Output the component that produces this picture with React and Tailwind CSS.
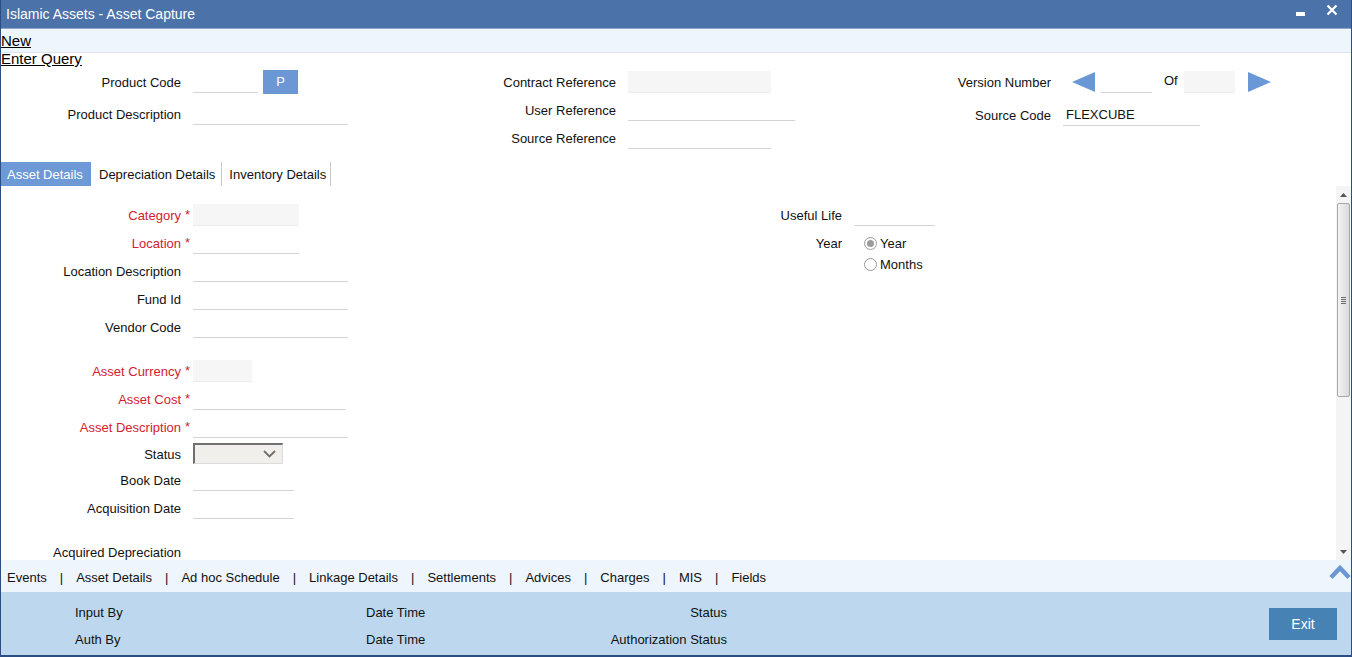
import React from "react";

const RED = "text-[#d3212d]";

function Line({ w, grey, children }) {
  return (
    <div
      className={
        grey
          ? `${w} h-[22px] bg-[#f6f6f6] border-b border-[#ededed]`
          : `${w} h-[22px] border-b border-[#d4d4d4] flex items-center pl-[3px] pt-[1px]`
      }
    >
      {children}
    </div>
  );
}

function FieldRow({ label, req, h = "h-[28px]", mt = "", lw = "w-[180px]", children }) {
  return (
    <div className={`flex items-center ${h} ${mt}`}>
      <div className={`${lw} text-right shrink-0 pt-[2px] whitespace-nowrap ${req ? RED : ""}`}>{label}</div>
      <div className={`w-[12px] shrink-0 pl-[4px] self-start pt-[4px] ${RED}`}>{req ? "*" : ""}</div>
      {children}
    </div>
  );
}

function Radio({ checked }) {
  return (
    <span className="w-[13px] h-[13px] rounded-full border border-[#9a9a9a] bg-white flex items-center justify-center shrink-0">
      {checked && <span className="w-[7px] h-[7px] rounded-full bg-[#9b9b9b]" />}
    </span>
  );
}

function TriLeft() {
  return (
    <svg width="23" height="20" viewBox="0 0 23 20" className="shrink-0">
      <polygon points="0,10 23,0 23,20" fill="#6a98d6" />
    </svg>
  );
}
function TriRight() {
  return (
    <svg width="23" height="20" viewBox="0 0 23 20" className="shrink-0">
      <polygon points="23,10 0,0 0,20" fill="#6a98d6" />
    </svg>
  );
}

export default function App() {
  const bottomTabs = [
    "Events",
    "Asset Details",
    "Ad hoc Schedule",
    "Linkage Details",
    "Settlements",
    "Advices",
    "Charges",
    "MIS",
    "Fields",
  ];
  return (
    <div className="w-[1352px] h-[657px] overflow-hidden bg-white font-['Liberation_Sans',Arial,sans-serif] text-[13px] text-[#111] flex flex-col border-x border-b-2 border-[#2b4d82]">
      {/* Title bar */}
      <div className="h-[28px] shrink-0 bg-[#4b73a9] flex justify-between">
        <div className="text-white text-[14px] pl-[5px] leading-[28px]">Islamic Assets - Asset Capture</div>
        <div className="flex items-start pr-[13px]">
          <div className="w-[9px] h-[4px] bg-white mt-[12px]" />
          <svg width="12" height="12" viewBox="0 0 12 12" className="ml-[21px] mt-[4px]">
            <path d="M1.5 1.5 L10.5 10.5 M10.5 1.5 L1.5 10.5" stroke="white" strokeWidth="2.2" />
          </svg>
        </div>
      </div>

      {/* Toolbar */}
      <div className="h-[25px] shrink-0 bg-[#eef5fd] border-t border-[#8da6c7] border-b border-b-[#dde3ea] pt-[3px]">
        <div className="text-[15px] leading-[18px] underline text-black">New</div>
      </div>
      <div className="text-[15px] leading-[18px] underline text-black -mt-[3px] h-[18px] shrink-0">Enter Query</div>

      {/* Header fields */}
      <div className="h-[94px] shrink-0 flex">
        <div className="w-[434px] shrink-0">
          <FieldRow label="Product Code">
            <Line w="w-[65px]" />
            <div className="ml-[5px] w-[35px] h-[24px] bg-[#6b98d4] text-white flex items-center justify-center">P</div>
          </FieldRow>
          <FieldRow label="Product Description" mt="mt-[4px]">
            <Line w="w-[155px]" />
          </FieldRow>
        </div>
        <div className="w-[435px] shrink-0">
          <FieldRow label="Contract Reference" lw="w-[181px]">
            <Line w="w-[143px]" grey />
          </FieldRow>
          <FieldRow label="User Reference" lw="w-[181px]">
            <Line w="w-[167px]" />
          </FieldRow>
          <FieldRow label="Source Reference" lw="w-[181px]">
            <Line w="w-[143px]" />
          </FieldRow>
        </div>
        <div className="flex-1">
          <div className="flex items-center h-[28px]">
            <div className="w-[181px] text-right shrink-0 pt-[2px]">Version Number</div>
            <div className="ml-[21px]">
              <TriLeft />
            </div>
            <div className="ml-[6px]">
              <Line w="w-[51px]" />
            </div>
            <div className="ml-[12px] -mt-[3px]">Of</div>
            <div className="ml-[6px]">
              <Line w="w-[51px]" grey />
            </div>
            <div className="ml-[13px]">
              <TriRight />
            </div>
          </div>
          <div className="flex items-center h-[28px] mt-[5px]">
            <div className="w-[181px] text-right shrink-0 pt-[2px]">Source Code</div>
            <div className="ml-[12px]">
              <Line w="w-[137px]">FLEXCUBE</Line>
            </div>
          </div>
        </div>
      </div>

      {/* Tabs */}
      <div className="h-[24px] shrink-0 flex items-stretch">
        <div className="bg-[#6d9ad6] text-white px-[6px] pt-[2px] w-[90px] whitespace-nowrap flex items-center">Asset Details</div>
        <div className="pl-[8px] pr-[6px] pt-[2px] whitespace-nowrap flex items-center border-r border-[#c8c8c8]">Depreciation Details</div>
        <div className="pl-[7px] pr-[4px] pt-[2px] whitespace-nowrap flex items-center border-r border-[#c8c8c8]">Inventory Details</div>
      </div>

      {/* Content */}
      <div className="h-[374px] shrink-0 flex">
        <div className="flex-1 overflow-hidden flex pt-[15px]">
          <div className="w-[660px] shrink-0">
            <FieldRow label="Category" req>
              <Line w="w-[106px]" grey />
            </FieldRow>
            <FieldRow label="Location" req>
              <Line w="w-[106px]" />
            </FieldRow>
            <FieldRow label="Location Description">
              <Line w="w-[155px]" />
            </FieldRow>
            <FieldRow label="Fund Id">
              <Line w="w-[155px]" />
            </FieldRow>
            <FieldRow label="Vendor Code">
              <Line w="w-[155px]" />
            </FieldRow>
            <FieldRow label="Asset Currency" req mt="mt-[16px]">
              <Line w="w-[59px]" grey />
            </FieldRow>
            <FieldRow label="Asset Cost" req>
              <Line w="w-[153px]" />
            </FieldRow>
            <FieldRow label="Asset Description" req>
              <Line w="w-[155px]" />
            </FieldRow>
            <FieldRow label="Status" h="h-[25px]">
              <div className="w-[90px] h-[21px] bg-[#f0efeb] border-t-2 border-l-2 border-[#707070] border-r border-b border-r-[#dcdcdc] border-b-[#dcdcdc] flex items-center justify-end pr-[6px]">
                <svg width="13" height="8" viewBox="0 0 13 8">
                  <path d="M1 1 L6.5 6.5 L12 1" stroke="#6f6f6f" strokeWidth="1.8" fill="none" />
                </svg>
              </div>
            </FieldRow>
            <FieldRow label="Book Date">
              <Line w="w-[101px]" />
            </FieldRow>
            <FieldRow label="Acquisition Date">
              <Line w="w-[101px]" />
            </FieldRow>
            <FieldRow label="Acquired Depreciation" mt="mt-[16px]">
              <Line w="w-[155px]" />
            </FieldRow>
            <FieldRow label="Net Value">
              <Line w="w-[155px]" />
            </FieldRow>
          </div>
          <div className="flex-1">
            <FieldRow label="Useful Life" lw="w-[181px]">
              <Line w="w-[81px]" />
            </FieldRow>
            <div className="flex items-center h-[28px]">
              <div className="w-[181px] text-right shrink-0 pt-[2px]">Year</div>
              <div className="ml-[22px] flex items-center gap-[3px] pt-[1px]">
                <Radio checked />
                <span>Year</span>
              </div>
            </div>
            <div className="flex items-center h-[14px]">
              <div className="w-[181px] shrink-0" />
              <div className="ml-[22px] flex items-center gap-[3px] pt-[1px]">
                <Radio />
                <span>Months</span>
              </div>
            </div>
          </div>
        </div>
        {/* Scrollbar */}
        <div className="w-[15px] shrink-0 bg-[#f4f4f4] flex flex-col">
          <div className="h-[17px] flex items-center justify-center">
            <svg width="7" height="4" viewBox="0 0 7 4">
              <polygon points="3.5,0 7,4 0,4" fill="#555" />
            </svg>
          </div>
          <div className="h-[194px] mx-[1px] rounded-[2px] border border-[#a8a8a8] bg-gradient-to-r from-[#f3f3f3] to-[#dadada] flex items-center justify-center">
            <div className="flex flex-col gap-[1px]">
              <div className="w-[5px] h-[1px] bg-[#6b6b6b]" />
              <div className="w-[5px] h-[1px] bg-[#6b6b6b]" />
              <div className="w-[5px] h-[1px] bg-[#6b6b6b]" />
              <div className="w-[5px] h-[1px] bg-[#6b6b6b]" />
            </div>
          </div>
          <div className="flex-1" />
          <div className="h-[17px] flex items-center justify-center">
            <svg width="7" height="4" viewBox="0 0 7 4">
              <polygon points="0,0 7,0 3.5,4" fill="#555" />
            </svg>
          </div>
        </div>
      </div>

      {/* Bottom tabs */}
      <div className="h-[32px] shrink-0 bg-[#eef5fd] flex justify-between">
        <div className="flex items-center gap-[13px] pl-[6px] pt-[3px]">
          {bottomTabs.map((t, i) => (
            <React.Fragment key={t}>
              {i > 0 && <span>|</span>}
              <span className="whitespace-nowrap">{t}</span>
            </React.Fragment>
          ))}
        </div>
        <svg width="22" height="17" viewBox="0 0 22 17" className="mt-[3px] shrink-0">
          <polyline points="2,14.5 11,5 20,14.5" stroke="#6b98d4" strokeWidth="4.5" fill="none" />
        </svg>
      </div>

      {/* Footer */}
      <div className="flex-1 bg-[#bdd8ee] flex justify-between">
        <div className="pt-[7px] pl-[74px]">
          <div className="flex items-center h-[27px]">
            <span className="w-[291px]">Input By</span>
            <div className="w-[361px] flex justify-between">
              <span>Date Time</span>
              <span>Status</span>
            </div>
          </div>
          <div className="flex items-center h-[27px]">
            <span className="w-[291px]">Auth By</span>
            <div className="w-[361px] flex justify-between">
              <span>Date Time</span>
              <span>Authorization Status</span>
            </div>
          </div>
        </div>
        <div className="pt-[16px] pr-[14px]">
          <div className="w-[68px] h-[32px] bg-[#4682b4] text-white text-[14px] flex items-center justify-center">Exit</div>
        </div>
      </div>
    </div>
  );
}
